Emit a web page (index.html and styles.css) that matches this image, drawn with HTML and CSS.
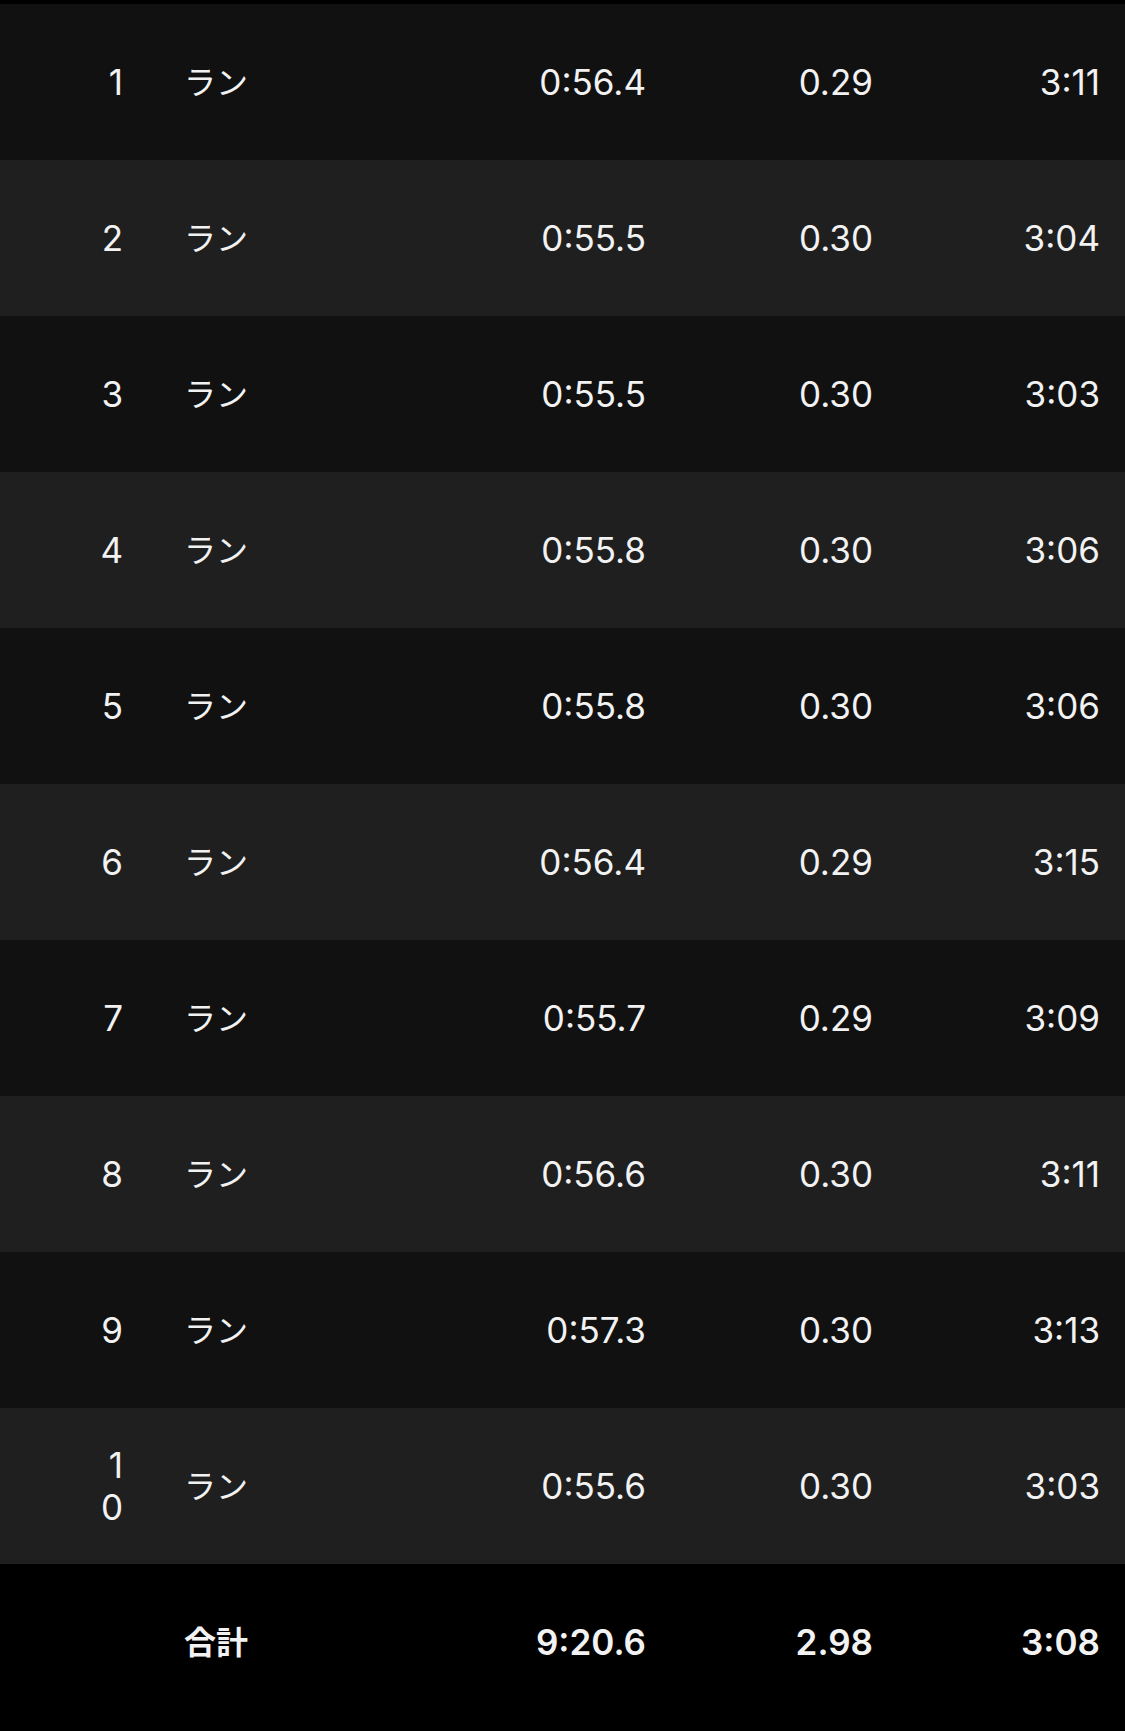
FILE: index.html
```html
<!DOCTYPE html>
<html lang="ja">
<head>
<meta charset="utf-8">
<title>ラップ</title>
<link rel="stylesheet" href="styles.css">
</head>
<body>
<div class="table">
  <div class="row"><div class="num">1</div><div class="name">ラン</div><div class="val">0:56.4</div><div class="val">0.29</div><div class="val">3:11</div></div>
  <div class="row"><div class="num">2</div><div class="name">ラン</div><div class="val">0:55.5</div><div class="val">0.30</div><div class="val">3:04</div></div>
  <div class="row"><div class="num">3</div><div class="name">ラン</div><div class="val">0:55.5</div><div class="val">0.30</div><div class="val">3:03</div></div>
  <div class="row"><div class="num">4</div><div class="name">ラン</div><div class="val">0:55.8</div><div class="val">0.30</div><div class="val">3:06</div></div>
  <div class="row"><div class="num">5</div><div class="name">ラン</div><div class="val">0:55.8</div><div class="val">0.30</div><div class="val">3:06</div></div>
  <div class="row"><div class="num">6</div><div class="name">ラン</div><div class="val">0:56.4</div><div class="val">0.29</div><div class="val">3:15</div></div>
  <div class="row"><div class="num">7</div><div class="name">ラン</div><div class="val">0:55.7</div><div class="val">0.29</div><div class="val">3:09</div></div>
  <div class="row"><div class="num">8</div><div class="name">ラン</div><div class="val">0:56.6</div><div class="val">0.30</div><div class="val">3:11</div></div>
  <div class="row"><div class="num">9</div><div class="name">ラン</div><div class="val">0:57.3</div><div class="val">0.30</div><div class="val">3:13</div></div>
  <div class="row"><div class="num">10</div><div class="name">ラン</div><div class="val">0:55.6</div><div class="val">0.30</div><div class="val">3:03</div></div>
  <div class="row total"><div class="num"></div><div class="name">合計</div><div class="val">9:20.6</div><div class="val">2.98</div><div class="val">3:08</div></div>
</div>
</body>
</html>
```
FILE: styles.css
```css
html, body {
  margin: 0;
  padding: 0;
  background: #000;
}
body {
  font-family: Inter, "Noto Sans CJK JP", sans-serif;
  color: #f2f2f2;
  font-size: 35px;
}
.table {
  padding-top: 4px;
  padding-bottom: 11px;
  background: #000;
}
.row {
  display: grid;
  grid-template-columns: 28px 1fr 150px 227px 227px;
  align-items: center;
  height: 156px;
  padding: 0 25px 0 95px;
  background: #111111;
}
.row:nth-child(even) {
  background: #1f1f1f;
}
.row.total {
  background: #000;
  font-weight: 600;
}
.num {
  text-align: right;
  word-break: break-all;
  line-height: 42px;
}
.name {
  padding-left: 61px;
  font-family: "Noto Sans CJK JP", sans-serif;
  font-size: 32px;
  line-height: 38px;
  padding-bottom: 4px;
}
.val {
  text-align: right;
  line-height: 42px;
}
```
